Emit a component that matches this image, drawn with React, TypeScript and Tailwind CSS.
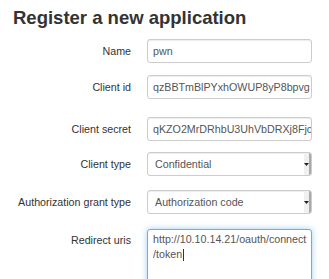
import React from "react";

const font = { fontFamily: '"Liberation Sans", Arial, sans-serif' };

function Row({
  label,
  top,
  children,
}: {
  label: string;
  top: string;
  children: React.ReactNode;
}) {
  return (
    <div className={`flex items-center ${top}`}>
      <label className="w-[131px] text-right text-[10.7px] text-[#333]">{label}</label>
      <div className="ml-[16px] w-[165px]">{children}</div>
    </div>
  );
}

function TextInput({ value }: { value: string }) {
  return (
    <div className="h-[24px] w-full overflow-hidden whitespace-nowrap rounded-[3px] border border-[#ccc] bg-white px-[5px] text-[10.7px] leading-[22px] text-[#555] shadow-[inset_0_1px_1px_rgba(0,0,0,0.075)]">
      {value}
    </div>
  );
}

function SelectBox({ value }: { value: string }) {
  return (
    <div className="flex h-[24px] w-full items-stretch overflow-hidden rounded-[3px] border border-[#ccc] bg-white text-[10.7px] text-[#555] shadow-[inset_0_1px_1px_rgba(0,0,0,0.075)]">
      <span className="flex-1 pl-[7px] leading-[22px]">{value}</span>
      <span className="flex w-[7px] items-center justify-center border-r-2 border-[#aaa] bg-[#f0f0f0]">
        <svg width="5" height="3" viewBox="0 0 5 3">
          <path d="M0 0h5L2.5 3z" fill="#222" />
        </svg>
      </span>
    </div>
  );
}

export default function App() {
  return (
    <div className="h-[279px] w-[329px] overflow-hidden bg-white" style={font}>
      <h2 className="pl-[13px] pt-[7px] text-[18.5px] font-bold leading-[22px] text-[#333]">
        Register a new application
      </h2>
      <form>
        <Row label="Name" top="mt-[10px]">
          <TextInput value="pwn" />
        </Row>
        <Row label="Client id" top="mt-[12px]">
          <TextInput value="qzBBTmBlPYxhOWUP8yP8bpvg" />
        </Row>
        <Row label="Client secret" top="mt-[18px]">
          <TextInput value="qKZO2MrDRhbU3UhVbDRXj8Fjc" />
        </Row>
        <Row label="Client type" top="mt-[11px]">
          <SelectBox value="Confidential" />
        </Row>
        <Row label="Authorization grant type" top="mt-[14px]">
          <SelectBox value="Authorization code" />
        </Row>
        <div className="mt-[15px] flex items-start">
          <label className="w-[131px] pt-[3px] text-right text-[10.7px] text-[#333]">
            Redirect uris
          </label>
          <div className="ml-[16px] h-[70px] w-[165px] rounded-[3px] border border-[#66afe9] bg-white px-[5px] pt-[2px] text-[10.7px] leading-[15px] text-[#555] shadow-[0_0_6px_rgba(102,175,233,0.6)]">
            http://10.10.14.21/oauth/connect
            <br />
            /token
            <span className="ml-px inline-block h-[12px] w-px bg-[#333] align-middle" />
          </div>
        </div>
      </form>
    </div>
  );
}
